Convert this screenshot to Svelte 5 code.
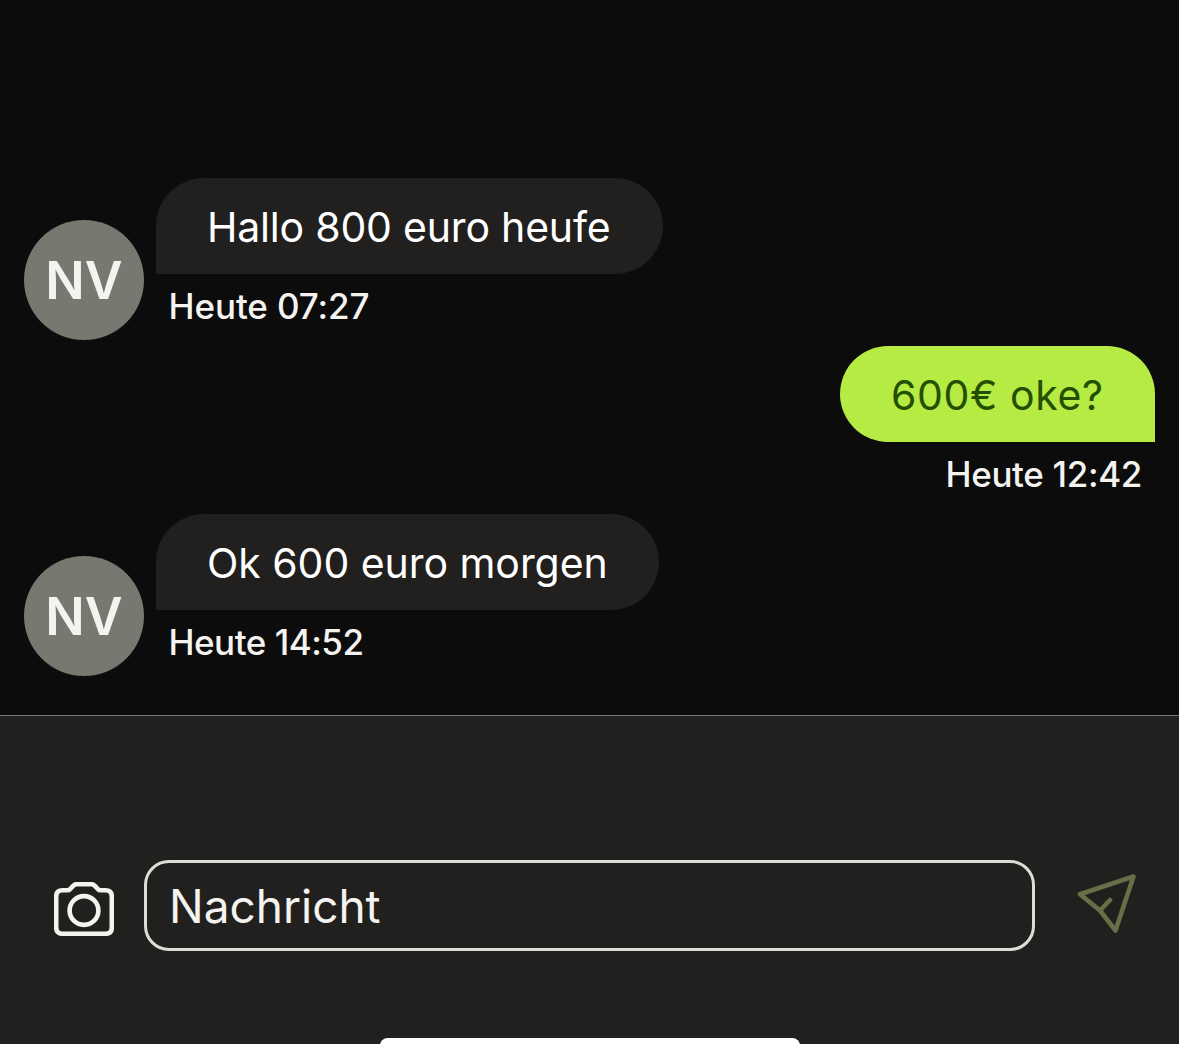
<script lang="ts">
	type Message = {
		text: string;
		time: string;
		own: boolean;
		width: number;
		spacing: number;
		timeSpacing: number;
	};

	const initials: string = 'NV';
	const messages: Message[] = [
		{ text: 'Hallo 800 euro heufe', time: 'Heute 07:27', own: false, width: 507, spacing: -0.2, timeSpacing: -0.1 },
		{ text: '600€ oke?', time: 'Heute 12:42', own: true, width: 315, spacing: 0.6, timeSpacing: -0.35 },
		{ text: 'Ok 600 euro morgen', time: 'Heute 14:52', own: false, width: 503, spacing: -0.05, timeSpacing: -0.5 }
	];

	let draft: string = $state('');
</script>

<div class="chat">
	<div class="messages">
	{#each messages as message}
		<div class="message" class:own={message.own}>
			{#if !message.own}
				<div class="avatar">{initials}</div>
			{/if}
			<div class="content">
				<div class="bubble" style="width:{message.width}px; letter-spacing:{message.spacing}px">{message.text}</div>
				<div class="time" style="letter-spacing:{message.timeSpacing}px">{message.time}</div>
			</div>
		</div>
	{/each}
	</div>

	<div class="composer">
		<button class="camera" aria-label="Foto">
			<svg width="60" height="54" viewBox="0 0 60 54">
				<path d="M8.5 8.2H13.5Q15 8.2 16.2 7L19.4 3.6Q20.7 2.2 22.5 2.2H37.5Q39.3 2.2 40.6 3.6L43.8 7Q45 8.2 46.5 8.2H51.5Q57.8 8.2 57.8 14.5V45.5Q57.8 51.8 51.5 51.8H8.5Q2.2 51.8 2.2 45.5V14.5Q2.2 8.2 8.5 8.2Z" />
				<circle cx="30" cy="28.5" r="14.4" />
			</svg>
		</button>
		<input class="field" placeholder="Nachricht" bind:value={draft} />
		<button class="send" aria-label="Senden">
			<svg width="60" height="60" viewBox="0 0 60 60">
				<path d="M3 20.3L56.5 2.5L38.5 56.5L23 36.5ZM23 36.5L33 26" />
			</svg>
		</button>
	</div>
	<div class="homebar"></div>
</div>

<style>
	:global(body) { margin:0; background:#0c0c0c }
	.chat { position:relative; display:flex; flex-direction:column; height:1044px; overflow:hidden; background:#0c0c0c; font-family:Inter, "Liberation Sans", sans-serif }
	.messages { box-sizing:border-box; height:715px; padding:178px 24px 0 }
	.message { display:flex; gap:12px; height:168px }
	.message.own { justify-content:flex-end }
	.avatar { width:120px; height:120px; margin-top:42px; border-radius:50%; background:#787770; color:#f4f3f0; font-size:52px; font-weight:600; line-height:121px; text-align:center }
	.bubble { box-sizing:border-box; height:96px; padding:0 51px; border-radius:48px 48px 48px 0; background:#21201e; color:#fff; font-size:41px; line-height:98px; white-space:nowrap }
	.own .bubble { border-radius:48px 48px 0 48px; background:#b5eb42; color:#235000 }
	.time { padding:9px 13px 0 12.5px; color:#f4f3f0; font-size:35px; font-weight:500; line-height:46px; white-space:nowrap }
	.own .time { text-align:right }
	.composer { box-sizing:border-box; display:flex; flex:1; align-items:flex-start; padding:144px 42px 0 54px; border-top:1px solid #787770; background:#21201e }
	button { padding:0; border:none; background:none; line-height:0; cursor:pointer }
	svg { fill:none; stroke-linecap:round; stroke-linejoin:round }
	.camera { margin:22px 30px 0 0 }
	.camera svg { stroke:#f4f3f0; stroke-width:4.6 }
	.send { margin:14px 0 0 42px }
	.send svg { stroke:#667047; stroke-width:4.6 }
	.field { box-sizing:border-box; flex:1; min-width:0; height:91px; padding:0 22px; border:3px solid #dddcd8; border-radius:25px; outline:none; background:none; color:#f4f3f0; font-family:inherit; font-size:46px }
	.field::placeholder { color:#f4f3f0; opacity:1 }
	.homebar { position:absolute; left:380px; top:1038px; width:420px; height:15px; border-radius:8px; background:#fff }
</style>
